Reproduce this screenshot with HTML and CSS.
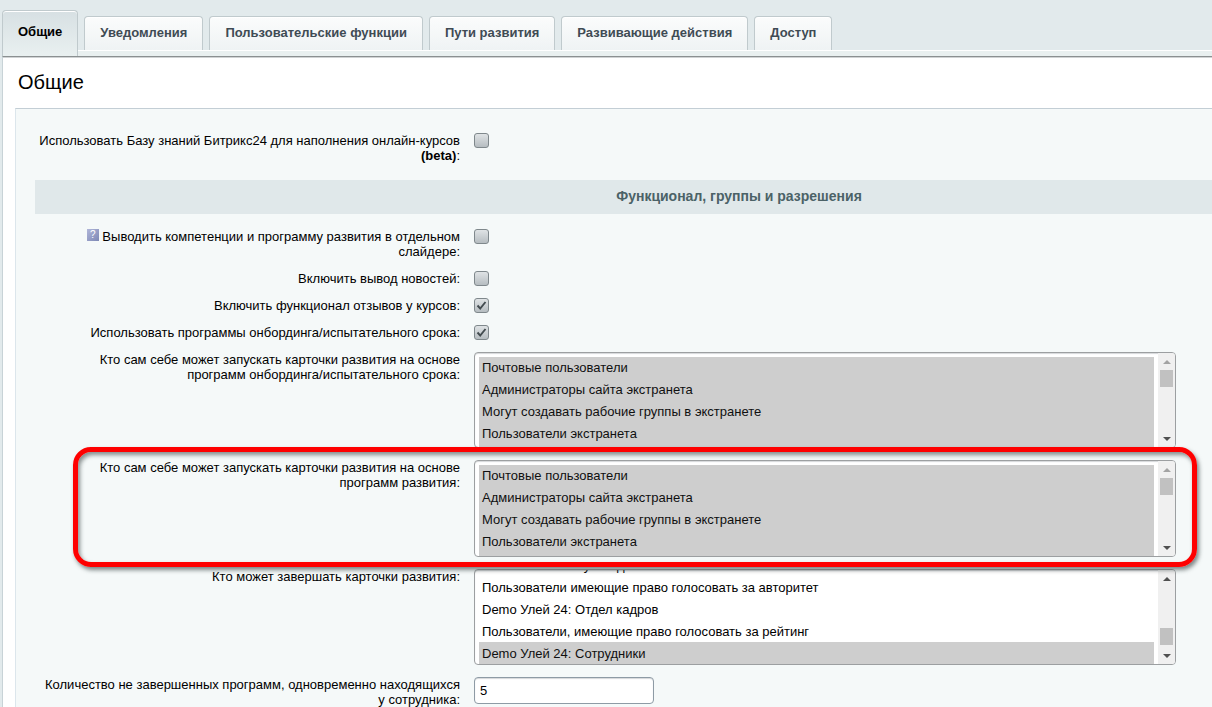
FILE: index.html
```html
<!DOCTYPE html>
<html lang="ru">
<head>
<meta charset="utf-8">
<title>Общие</title>
<link rel="stylesheet" href="styles.css">
</head>
<body>
<nav class="tabs">
  <button type="button" class="tab tab-active">Общие</button>
  <button type="button" class="tab">Уведомления</button>
  <button type="button" class="tab">Пользовательские функции</button>
  <button type="button" class="tab">Пути развития</button>
  <button type="button" class="tab">Развивающие действия</button>
  <button type="button" class="tab">Доступ</button>
</nav>
<main class="page">
  <h1 class="title">Общие</h1>
  <form class="panel">
    <div class="row">
      <label class="label" for="kb">Использовать Базу знаний Битрикс24 для наполнения онлайн-курсов <b>(beta)</b>:</label>
      <div class="field"><input class="check" type="checkbox" id="kb"></div>
    </div>
    <h2 class="section">Функционал, группы и разрешения</h2>
    <div class="row">
      <label class="label" for="slider"><span class="hint">?</span> Выводить компетенции и программу развития в отдельном слайдере:</label>
      <div class="field"><input class="check" type="checkbox" id="slider"></div>
    </div>
    <div class="row">
      <label class="label" for="news">Включить вывод новостей:</label>
      <div class="field"><input class="check" type="checkbox" id="news"></div>
    </div>
    <div class="row">
      <label class="label" for="reviews">Включить функционал отзывов у курсов:</label>
      <div class="field"><input class="check" type="checkbox" id="reviews" checked></div>
    </div>
    <div class="row">
      <label class="label" for="onboarding">Использовать программы онбординга/испытательного срока:</label>
      <div class="field"><input class="check" type="checkbox" id="onboarding" checked></div>
    </div>
    <div class="row">
      <label class="label" for="who-onboarding">Кто сам себе может запускать карточки развития на основе программ онбординга/испытательного срока:</label>
      <div class="field">
        <div class="listbox">
          <select class="list" id="who-onboarding" multiple size="4">
            <option selected>Почтовые пользователи</option>
            <option selected>Администраторы сайта экстранета</option>
            <option selected>Могут создавать рабочие группы в экстранете</option>
            <option selected>Пользователи экстранета</option>
            <option selected></option>
          </select>
          <div class="bar"><i class="arrow up dim"></i><i class="thumb"></i><i class="arrow down"></i></div>
        </div>
      </div>
    </div>
    <div class="row marked">
      <label class="label" for="who-dev">Кто сам себе может запускать карточки развития на основе программ развития:</label>
      <div class="field">
        <div class="listbox">
          <select class="list" id="who-dev" multiple size="4">
            <option selected>Почтовые пользователи</option>
            <option selected>Администраторы сайта экстранета</option>
            <option selected>Могут создавать рабочие группы в экстранете</option>
            <option selected>Пользователи экстранета</option>
            <option selected></option>
          </select>
          <div class="bar"><i class="arrow up dim"></i><i class="thumb"></i><i class="arrow down"></i></div>
        </div>
      </div>
    </div>
    <div class="row">
      <label class="label" for="who-finish">Кто может завершать карточки развития:</label>
      <div class="field">
        <div class="listbox">
          <select class="list list-end" id="who-finish" multiple size="4">
            <option>Demo Улей 24: Руководство</option>
            <option>Пользователи имеющие право голосовать за авторитет</option>
            <option>Demo Улей 24: Отдел кадров</option>
            <option>Пользователи, имеющие право голосовать за рейтинг</option>
            <option selected>Demo Улей 24: Сотрудники</option>
          </select>
          <div class="bar bar-end"><i class="arrow up"></i><i class="thumb"></i><i class="arrow down"></i></div>
        </div>
      </div>
    </div>
    <div class="row">
      <label class="label" for="limit">Количество не завершенных программ, одновременно находящихся у сотрудника:</label>
      <div class="field"><input class="text" type="text" id="limit" value="5"></div>
    </div>
  </form>
</main>
<script src="script.js"></script>
</body>
</html>
```
FILE: styles.css
```css
* { box-sizing: border-box; }

body {
  margin: 0;
  padding: 10px 0 0 2px;
  background: #e2eaec;
  color: #000;
  font: 13px/15px "Liberation Sans", Arial, sans-serif;
  overflow-x: hidden;
}

.tabs {
  display: flex;
  align-items: flex-end;
  gap: 6px;
  height: 46px;
  padding-bottom: 6px;
  background: linear-gradient(#fff, #fff) 0 40px / 100% 1px no-repeat,
              linear-gradient(#e9f0f0, #e9f0f0) 0 41px / 100% 5px no-repeat;
}

.tab {
  flex: none;
  height: 34px;
  padding: 0 15px 2px;
  border: 1px solid #c0cacd;
  border-bottom: 0;
  border-radius: 4px 4px 0 0;
  background: linear-gradient(#fbfcfc, #eff3f4);
  box-shadow: inset 0 1px #fff;
  color: #3f4b54;
  font: bold 13px/15px "Liberation Sans", Arial, sans-serif;
}

.tab-active {
  height: 46px;
  margin-bottom: -6px;
  padding-bottom: 4px;
  background: linear-gradient(#d7e0e3, #e9f0f0);
  color: #000;
}

.page {
  min-height: calc(100vh - 56px);
  padding-left: 12px;
  border-top: 1px solid #8b9091;
  border-left: 1px solid #c8d3d7;
  background: #fff;
  box-shadow: inset 0 1px #d0d3d4;
}

.title {
  margin: 0;
  padding: 13px 3px 14px;
  font-size: 20px;
  font-weight: normal;
  line-height: 24px;
}

.panel {
  padding: 18px 0 0 19px;
  border-top: 1px solid #c3ced5;
  border-left: 1px solid #dce6ec;
  background: #f5f9f9;
}

.row {
  display: grid;
  grid-template-columns: 425px minmax(0, 1fr);
  column-gap: 14px;
  padding: 6px 0;
}

.label {
  padding-left: 3px;
  text-align: right;
}

.field {
  display: flex;
  padding-right: 36px;
}

.section {
  margin: 11px 0 9px;
  padding: 8px 0 10px 231px;
  background: #e0e8ea;
  color: #4b6267;
  font-size: 14px;
  line-height: 16px;
  text-align: center;
}

.hint {
  display: inline-block;
  width: 12px;
  height: 12px;
  background: linear-gradient(135deg, #b0b6d9, #7d88b5);
  color: #fff;
  font-size: 10px;
  line-height: 12px;
  text-align: center;
  vertical-align: top;
}

.check {
  appearance: none;
  width: 15px;
  height: 15px;
  margin: 0;
  border: 1px solid #7f888c;
  border-radius: 3px;
  background: linear-gradient(#dfe3e5, #b6bdc1);
}

.check:checked {
  background: url("data:image/svg+xml,%3Csvg xmlns='http://www.w3.org/2000/svg' viewBox='0 0 13 13'%3E%3Cpath d='M2.5 6.5 5.2 9.5 10.5 3' fill='none' stroke='%23434c50' stroke-width='1.9'/%3E%3C/svg%3E") center / 13px 13px no-repeat,
              linear-gradient(#dfe3e5, #b6bdc1);
}

.listbox {
  flex: 1;
  display: flex;
  height: 96px;
  border: 1px solid #9c9fa1;
  border-radius: 4px;
  background: #fff;
  box-shadow: inset 0 1px 1px #d5d8da;
  overflow: hidden;
}

.list {
  flex: 1;
  min-width: 0;
  margin: 4px 4px 0 4px;
  padding: 0;
  border: 0;
  border-radius: 0;
  outline: 0;
  background: transparent;
  color: #000;
  font: 13px/15px "Liberation Sans", Arial, sans-serif;
  scrollbar-width: none;
}

.list option {
  height: 22px;
  padding: 3px 3px 4px;
}

.list-end { margin-top: 0; }

.list-end option { padding: 4px 3px 3px; }

.bar {
  display: flex;
  flex-direction: column;
  align-items: center;
  width: 17px;
  padding: 7px 0 6px;
  background: #f0f0f0;
}

.thumb {
  width: 13px;
  height: 17px;
  margin-top: 6px;
  background: #c1c1c1;
}

.bar-end .thumb { margin: auto 0 9px; }

.arrow {
  border: 4px solid transparent;
  border-top-width: 0;
  border-bottom: 4px solid #505050;
}

.arrow.down {
  margin-top: auto;
  border-top: 4px solid #505050;
  border-bottom-width: 0;
}

.bar-end .down { margin-top: 0; }

.arrow.dim { border-bottom-color: #a3a3a3; }

.marked { position: relative; }

.marked .listbox { height: 97px; }

.marked::after {
  content: "";
  position: absolute;
  z-index: 1;
  inset: -7px 15px -4px 38px;
  border: 5px solid #fe0000;
  border-radius: 18px;
  box-shadow: 2px 3px 4px rgba(60, 70, 70, .65), inset 2px 3px 4px rgba(60, 70, 70, .6);
  pointer-events: none;
}

.text {
  width: 180px;
  height: 27px;
  padding: 0 5px;
  border: 1px solid #8e9ba5;
  border-radius: 4px;
  outline: 0;
  background: #fff;
  box-shadow: inset 0 1px 1px #d5d8da;
  font: 13px/15px "Liberation Sans", Arial, sans-serif;
}
```
FILE: script.js
```js
document.querySelectorAll(".list").forEach(function (list) {
  list.scrollTop = list.classList.contains("list-end") ? list.scrollHeight : 0;
});
```
